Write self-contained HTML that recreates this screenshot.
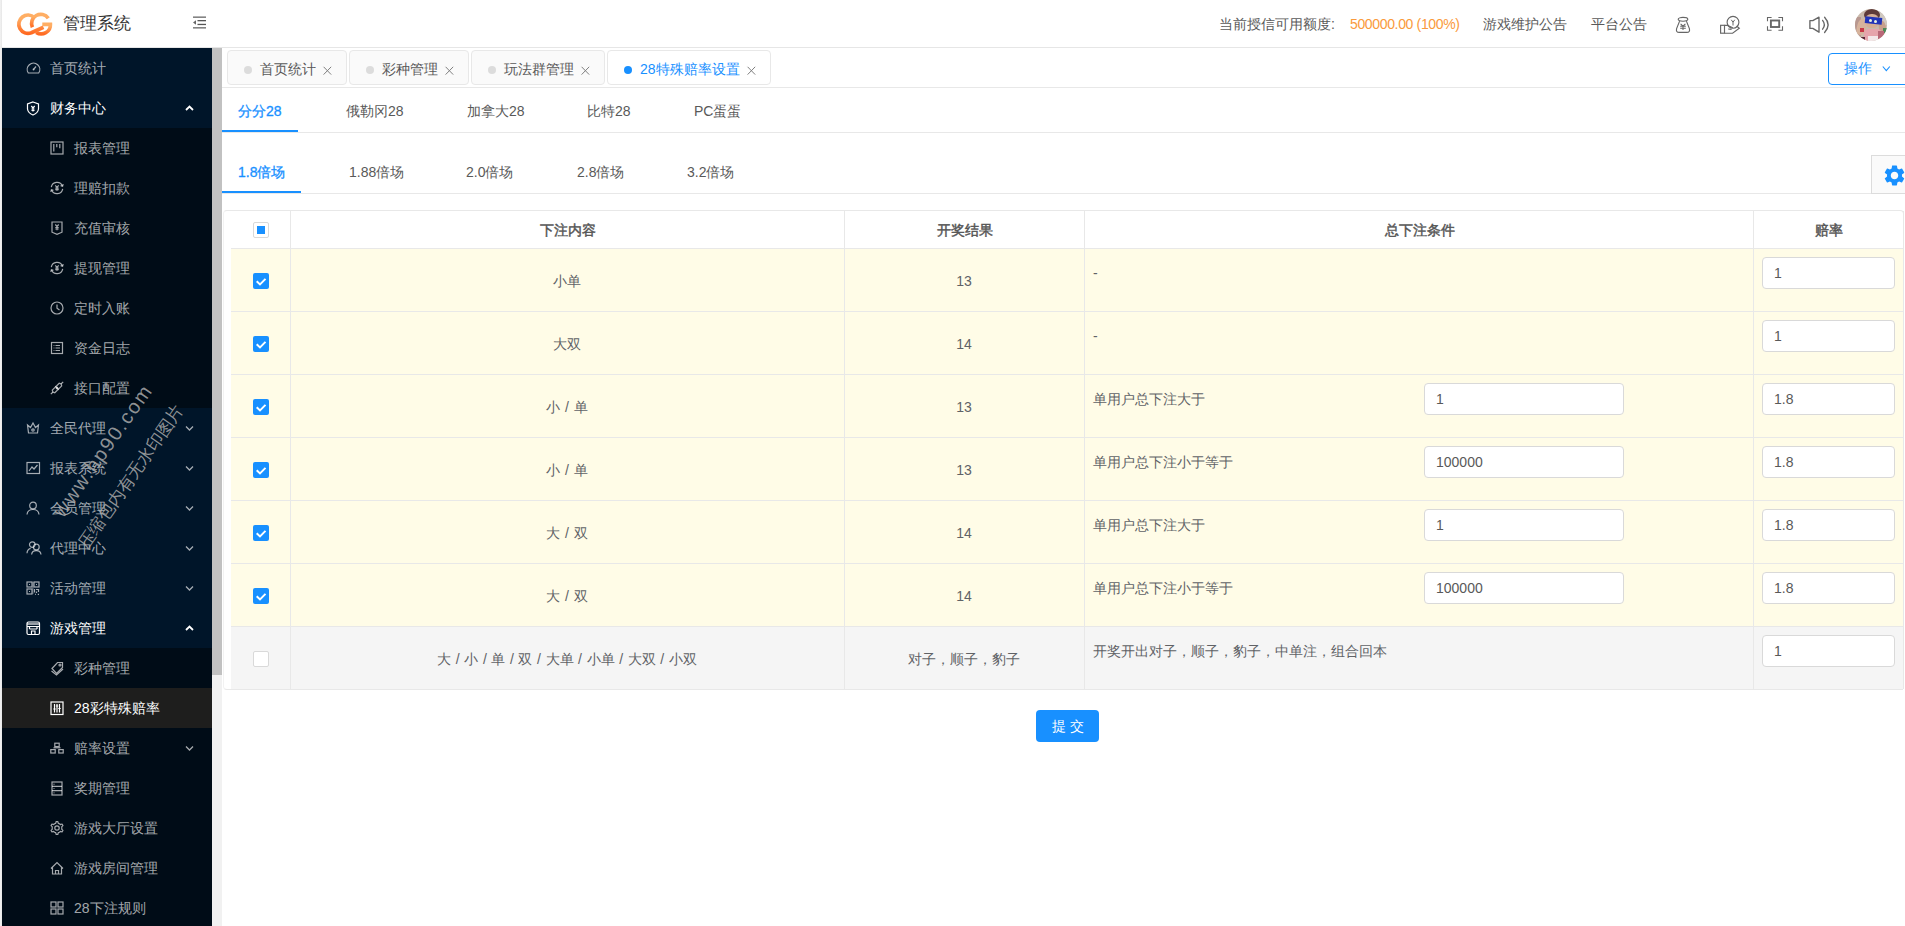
<!DOCTYPE html><html><head><meta charset="utf-8"><style>
*{box-sizing:border-box;margin:0;padding:0}
html,body{width:1905px;height:926px;overflow:hidden;background:#fff;font-family:"Liberation Sans",sans-serif;font-size:14px;color:#595959}
div,span{position:absolute;white-space:nowrap}
.mi{left:0;width:210px;height:40px;line-height:40px;color:rgba(255,255,255,.65)}
.mi.sub{background:#000c17}
.mi .t{left:48px;top:0}
.mi.sub .t{left:72px}
.mi.open{color:#fff}
.mi.sel{background:#1e1e1d;color:#fff}
svg{position:absolute;overflow:visible}
.tab{top:50px;height:35px;border:1px solid #e8e8e8;border-radius:4px;background:#fafafa;color:#595959;line-height:33px}
.tab .dot{left:16px;top:15px;width:8px;height:8px;border-radius:50%;background:#dcdcdc}
.tab .tt{left:32px;top:2px}
.ntab{color:#595959;line-height:20px}
.ntab.act{color:#1890ff}
.ln{background:#e8e8e8}
.inp{height:32px;border:1px solid #d9d9d9;border-radius:4px;background:#fff;line-height:30px;padding-left:11px;color:#595959}
.cb{width:16px;height:16px;border-radius:2px}
.cb.on{background:#1890ff}
.cb.off{background:#fff;border:1px solid #d9d9d9}
.ct{line-height:20px;color:#606266}
</style></head><body>
<div style="left:0;top:0;width:2px;height:926px;background:linear-gradient(to right,#f3f3f3,#e6e6e6)"></div>
<div style="left:2px;top:0;width:1903px;height:47px;background:#fff"></div>
<div class="ln" style="left:2px;top:47px;width:1903px;height:1px;background:#e6e6e6"></div>
<svg style="left:0;top:0" width="60" height="48" viewBox="0 0 60 48">
<defs><linearGradient id="lg" x1="0" y1="0" x2="0" y2="1"><stop offset="0.2" stop-color="#ffae64"/><stop offset="1" stop-color="#ff6a22"/></linearGradient></defs>
<g fill="none" stroke="url(#lg)" stroke-width="3.7" stroke-linecap="butt">
<path d="M34.4 17.6 A9.2 9.2 0 1 0 31.3 32.8 L43.5 27.2"/>
<path d="M48.3 18.2 A9.2 9.2 0 0 0 32.4 27.3"/>
<path d="M36.2 32.4 A9.2 9.2 0 0 0 50.4 24.3 L42.3 24.3"/>
</g></svg>
<div style="left:63px;top:12px;font-size:17px;line-height:24px;color:#333">管理系统</div>
<svg style="left:193px;top:16px" width="14" height="13" viewBox="0 0 14 13">
<rect x="0" y="0.5" width="13" height="1.3" fill="#666"/><rect x="4.5" y="4" width="8.5" height="1.3" fill="#555"/>
<rect x="4.5" y="7.8" width="8.5" height="1.3" fill="#555"/><rect x="0" y="11.2" width="13" height="1.3" fill="#666"/>
<path d="M0 6.5 L3 4.2 L3 8.8Z" fill="#666"/></svg>
<div style="left:1219px;top:14px;line-height:20px;color:#595959">当前授信可用额度</div>
<div style="left:1331px;top:14px;line-height:20px;color:#595959">:</div>
<div style="left:1350px;top:14px;line-height:20px;color:#fa9a3c;letter-spacing:-0.35px">500000.00 (100%)</div>
<div style="left:1483px;top:14px;line-height:20px;color:#595959">游戏维护公告</div>
<div style="left:1591px;top:14px;line-height:20px;color:#595959">平台公告</div>
<svg style="left:1675px;top:16px" width="16" height="17" viewBox="0 0 16 17" fill="none" stroke="#666" stroke-width="1.15">
<ellipse cx="8" cy="3.3" rx="4.8" ry="1.9"/>
<path d="M4.6 5.1 L1.6 12.6 Q0.7 16.4 4.2 16.4 L11.8 16.4 Q15.3 16.4 14.4 12.6 L11.4 5.1"/>
<path d="M5.6 7.8 L8 10.2 L10.4 7.8 M8 10.2 L8 14 M5.2 10.2 L10.8 10.2 M5.2 12.3 L10.8 12.3" stroke-width="1.05"/></svg>
<svg style="left:1720px;top:16px" width="22" height="18" viewBox="0 0 22 18" fill="none" stroke="#666" stroke-width="1.15">
<circle cx="13" cy="6.3" r="5.9"/><path d="M11.3 3.8 L13 6.3 L14.7 3.8 M13 6.3 L13 9.5" stroke-width="1"/>
<rect x="0.6" y="9.3" width="3.9" height="7.9"/><path d="M4.5 9.4 L7.5 9.4 L12.8 11.7 M16.6 10 L19.3 12.3 L12.6 17.2 L4.5 17.2 M8.2 13 L11.6 13.4"/></svg>
<svg style="left:1767px;top:17px" width="16" height="14" viewBox="0 0 16 14" fill="none" stroke="#666" stroke-width="1.1">
<path d="M0.5 4.3 L0.5 0.5 L4.6 0.5 M11.4 0.5 L15.5 0.5 L15.5 4.3 M15.5 9.3 L15.5 13.2 L11.4 13.2 M4.6 13.2 L0.5 13.2 L0.5 9.3"/>
<rect x="3.9" y="3.5" width="8.3" height="6.5" stroke-width="1.9"/></svg>
<svg style="left:1808px;top:16px" width="22" height="18" viewBox="0 0 22 18" fill="none" stroke="#666" stroke-width="1.35" stroke-linejoin="round" stroke-linecap="round">
<path d="M1.9 4.6 L4.8 4.6 L11 1.2 L11 16.2 L4.8 12.4 L1.9 12.4Z"/><path d="M14.6 4.4 Q18.1 8.8 14.6 13.2"/><path d="M16.6 1.3 Q23.6 8.9 16.6 16.5"/></svg>
<div style="left:1855px;top:9px;width:32px;height:32px;border-radius:50%;overflow:hidden;background:#c9b9ab">
<div style="left:-2px;top:-2px;width:36px;height:36px;filter:blur(0.7px)">
<div style="left:0;top:10px;width:8px;height:22px;background:#b89890"></div>
<div style="left:26px;top:4px;width:10px;height:14px;background:#d0c8c0"></div>
<div style="left:11px;top:2px;width:16px;height:12px;border-radius:50%;background:#5e3a38"></div>
<div style="left:12px;top:7px;width:14px;height:14px;border-radius:45%;background:#d5ad94"></div>
<div style="left:4px;top:12px;width:9px;height:16px;border-radius:40%;background:#d7b39c;transform:rotate(15deg)"></div>
<div style="left:26px;top:14px;width:7px;height:14px;border-radius:40%;background:#c9a08c;transform:rotate(-10deg)"></div>
<div style="left:12px;top:10px;width:17px;height:7px;background:#2234b8;transform:rotate(6deg)"></div>
<div style="left:16px;top:12px;width:3px;height:3px;background:#e8f0e0;border-radius:50%"></div>
<div style="left:21px;top:13px;width:3px;height:3px;background:#e8f0e0;border-radius:50%"></div>
<div style="left:7px;top:21px;width:4px;height:4px;background:#c83848"></div>
<div style="left:30px;top:21px;width:5px;height:5px;background:#4e8a58"></div>
<div style="left:11px;top:22px;width:18px;height:14px;border-radius:30%;background:#e6a4ac"></div>
<div style="left:15px;top:29px;width:10px;height:7px;background:#f4e8ea"></div>
<div style="left:3px;top:30px;width:9px;height:6px;background:#5a2838"></div>
<div style="left:25px;top:24px;width:6px;height:10px;background:#b86878"></div>
</div></div>
<div style="left:2px;top:48px;width:210px;height:878px;background:#001529;overflow:hidden">
<div class="mi" style="top:0px"><svg style="left:24px;top:13px" width="14" height="14" viewBox="0 0 14 14"><path d="M2.3 12 A6.3 6.3 0 1 1 12.7 12 Z" stroke="rgba(255,255,255,.65)" fill="none" stroke-width="1.2"/><path d="M7.5 8.5 L10 5.5" stroke="rgba(255,255,255,.65)" fill="none" stroke-width="1.2"/><circle cx="7.5" cy="8.5" r="0.9" fill="rgba(255,255,255,.65)"/></svg><span class="t">首页统计</span></div>
<div class="mi open" style="top:40px"><svg style="left:24px;top:13px" width="14" height="14" viewBox="0 0 14 14"><path d="M7 1 L12.5 3 L12.5 8 Q12 12 7 14 Q2 12 1.5 8 L1.5 3Z" stroke="#fff" fill="none" stroke-width="1.2"/><path d="M5.3 5 L7 7 L8.7 5 M7 7 L7 10.5 M5.5 8 L8.5 8 M5.5 9.5 L8.5 9.5" stroke="#fff" fill="none" stroke-width="1.2" stroke-width="1"/></svg><span class="t">财务中心</span><svg style="left:183px;top:17px" width="9" height="7" viewBox="0 0 9 7"><path d="M1 5 L4.5 1.5 L8 5" stroke="#fff" stroke-width="1.8" fill="none"/></svg></div>
<div class="mi sub" style="top:80px"><svg style="left:48px;top:13px" width="14" height="14" viewBox="0 0 14 14"><rect x="1" y="1" width="12" height="12" stroke="rgba(255,255,255,.65)" fill="none" stroke-width="1.2"/><path d="M3.8 3 L3.8 10.5 M6.8 3 L6.8 6.2 M9.8 3 L9.8 7.2" stroke="rgba(255,255,255,.65)" fill="none" stroke-width="1.2" stroke-width="1.5"/></svg><span class="t">报表管理</span></div>
<div class="mi sub" style="top:120px"><svg style="left:48px;top:13px" width="14" height="14" viewBox="0 0 14 14"><path d="M1.3 6.2 A5.8 5.8 0 0 1 12.4 5" stroke="rgba(255,255,255,.65)" fill="none" stroke-width="1.2"/><path d="M12.7 7.8 A5.8 5.8 0 0 1 1.6 9" stroke="rgba(255,255,255,.65)" fill="none" stroke-width="1.2"/><path d="M10.6 4.6 L12.6 5.3 L13.2 3.2 M3.4 9.4 L1.4 8.7 L0.8 10.8" stroke="rgba(255,255,255,.65)" fill="none" stroke-width="1.2" stroke-width="1"/><path d="M5.3 4.3 L7 6.3 L8.7 4.3 M7 6.3 L7 9.8 M5.3 7.2 L8.7 7.2 M5.3 8.6 L8.7 8.6" stroke="rgba(255,255,255,.65)" fill="none" stroke-width="1.2" stroke-width="1"/></svg><span class="t">理赔扣款</span></div>
<div class="mi sub" style="top:160px"><svg style="left:48px;top:13px" width="14" height="14" viewBox="0 0 14 14"><path d="M2 1 L12 1 L12 11.2 L7 13.3 L2 11.2Z" stroke="rgba(255,255,255,.65)" fill="none" stroke-width="1.2"/><path d="M5.3 3.5 L7 5.5 L8.7 3.5 M7 5.5 L7 9.3 M5.3 6.5 L8.7 6.5 M5.3 8 L8.7 8" stroke="rgba(255,255,255,.65)" fill="none" stroke-width="1.2" stroke-width="1"/></svg><span class="t">充值审核</span></div>
<div class="mi sub" style="top:200px"><svg style="left:48px;top:13px" width="14" height="14" viewBox="0 0 14 14"><path d="M1.3 6.2 A5.8 5.8 0 0 1 12.4 5" stroke="rgba(255,255,255,.65)" fill="none" stroke-width="1.2"/><path d="M12.7 7.8 A5.8 5.8 0 0 1 1.6 9" stroke="rgba(255,255,255,.65)" fill="none" stroke-width="1.2"/><path d="M10.6 4.6 L12.6 5.3 L13.2 3.2 M3.4 9.4 L1.4 8.7 L0.8 10.8" stroke="rgba(255,255,255,.65)" fill="none" stroke-width="1.2" stroke-width="1"/><path d="M5.3 4.3 L7 6.3 L8.7 4.3 M7 6.3 L7 9.8 M5.3 7.2 L8.7 7.2 M5.3 8.6 L8.7 8.6" stroke="rgba(255,255,255,.65)" fill="none" stroke-width="1.2" stroke-width="1"/></svg><span class="t">提现管理</span></div>
<div class="mi sub" style="top:240px"><svg style="left:48px;top:13px" width="14" height="14" viewBox="0 0 14 14"><circle cx="7" cy="7" r="6" stroke="rgba(255,255,255,.65)" fill="none" stroke-width="1.2"/><path d="M7 3.5 L7 7.3 L9.5 9" stroke="rgba(255,255,255,.65)" fill="none" stroke-width="1.2"/></svg><span class="t">定时入账</span></div>
<div class="mi sub" style="top:280px"><svg style="left:48px;top:13px" width="14" height="14" viewBox="0 0 14 14"><rect x="1.5" y="1.5" width="11" height="11" stroke="rgba(255,255,255,.65)" fill="none" stroke-width="1.2"/><path d="M5.5 4.5 L10 4.5 M5.5 7 L10 7 M5.5 9.5 L10 9.5 M3.6 4.5 L4.4 4.5 M3.6 7 L4.4 7 M3.6 9.5 L4.4 9.5" stroke="rgba(255,255,255,.65)" fill="none" stroke-width="1.2"/></svg><span class="t">资金日志</span></div>
<div class="mi sub" style="top:320px"><svg style="left:48px;top:13px" width="14" height="14" viewBox="0 0 14 14"><path d="M0.8 13.2 L3 11 M11 3 L13.2 0.8 M6 8 L8 6" stroke="rgba(255,255,255,.65)" fill="none" stroke-width="1.2"/><path d="M3 11 L2.3 9.2 L5.8 5.7 L8.3 8.2 L4.8 11.7Z" stroke="rgba(255,255,255,.65)" fill="none" stroke-width="1.2"/><path d="M11 3 L11.7 4.8 L8.2 8.3 L5.7 5.8 L9.2 2.3Z" stroke="rgba(255,255,255,.65)" fill="none" stroke-width="1.2"/></svg><span class="t">接口配置</span></div>
<div class="mi" style="top:360px"><svg style="left:24px;top:13px" width="14" height="14" viewBox="0 0 14 14"><path d="M1.5 4 L4.5 6.5 L7 2 L9.5 6.5 L12.5 4 L11.5 12 L2.5 12Z" stroke="rgba(255,255,255,.65)" fill="none" stroke-width="1.2"/><circle cx="7" cy="9" r="1.2" stroke="rgba(255,255,255,.65)" fill="none" stroke-width="1.2"/></svg><span class="t">全民代理</span><svg style="left:183px;top:17px" width="9" height="7" viewBox="0 0 9 7"><path d="M1 1.5 L4.5 5 L8 1.5" stroke="rgba(255,255,255,.65)" stroke-width="1.3" fill="none"/></svg></div>
<div class="mi" style="top:400px"><svg style="left:24px;top:13px" width="14" height="14" viewBox="0 0 14 14"><rect x="1" y="1.5" width="12.5" height="11" stroke="rgba(255,255,255,.65)" fill="none" stroke-width="1.2"/><path d="M3 10 L6 6 L8 8 L11.5 4" stroke="rgba(255,255,255,.65)" fill="none" stroke-width="1.2"/></svg><span class="t">报表系统</span><svg style="left:183px;top:17px" width="9" height="7" viewBox="0 0 9 7"><path d="M1 1.5 L4.5 5 L8 1.5" stroke="rgba(255,255,255,.65)" stroke-width="1.3" fill="none"/></svg></div>
<div class="mi" style="top:440px"><svg style="left:24px;top:13px" width="14" height="14" viewBox="0 0 14 14"><circle cx="7" cy="4.5" r="3.3" stroke="rgba(255,255,255,.65)" fill="none" stroke-width="1.2"/><path d="M1 13.5 Q1.5 8.5 7 8.5 Q12.5 8.5 13 13.5" stroke="rgba(255,255,255,.65)" fill="none" stroke-width="1.2"/></svg><span class="t">会员管理</span><svg style="left:183px;top:17px" width="9" height="7" viewBox="0 0 9 7"><path d="M1 1.5 L4.5 5 L8 1.5" stroke="rgba(255,255,255,.65)" stroke-width="1.3" fill="none"/></svg></div>
<div class="mi" style="top:480px"><svg style="left:24px;top:13px" width="14" height="14" viewBox="0 0 14 14"><circle cx="6.3" cy="3.6" r="2.8" stroke="rgba(255,255,255,.65)" fill="none" stroke-width="1.2"/><path d="M1 12.3 Q1.2 8.2 4.6 7.3" stroke="rgba(255,255,255,.65)" fill="none" stroke-width="1.2"/><circle cx="10.3" cy="6" r="2.9" stroke="rgba(255,255,255,.65)" fill="none" stroke-width="1.2"/><path d="M5.6 13.5 Q6 9.6 10.3 9.6 Q14.6 9.6 15 13.5" stroke="rgba(255,255,255,.65)" fill="none" stroke-width="1.2"/></svg><span class="t">代理中心</span><svg style="left:183px;top:17px" width="9" height="7" viewBox="0 0 9 7"><path d="M1 1.5 L4.5 5 L8 1.5" stroke="rgba(255,255,255,.65)" stroke-width="1.3" fill="none"/></svg></div>
<div class="mi" style="top:520px"><svg style="left:24px;top:13px" width="14" height="14" viewBox="0 0 14 14"><rect x="1" y="1" width="5" height="5" stroke="rgba(255,255,255,.65)" fill="none" stroke-width="1.2"/><rect x="8" y="1" width="5" height="5" stroke="rgba(255,255,255,.65)" fill="none" stroke-width="1.2"/><rect x="1" y="8" width="5" height="5" stroke="rgba(255,255,255,.65)" fill="none" stroke-width="1.2"/><rect x="3" y="3" width="1" height="1" fill="rgba(255,255,255,.65)"/><rect x="10" y="3" width="1" height="1" fill="rgba(255,255,255,.65)"/><rect x="3" y="10" width="1" height="1" fill="rgba(255,255,255,.65)"/><path d="M8.5 8 L8.5 11.5 M10 8.5 L12.5 8.5 L12.5 11 M10.5 10.5 L10.5 12 M9 13.3 L9.8 13.3 M11.8 13.3 L13 13.3" stroke="rgba(255,255,255,.65)" fill="none" stroke-width="1.2"/><rect x="6.5" y="1" width="1" height="12" fill="rgba(255,255,255,.65)" opacity="0.5"/></svg><span class="t">活动管理</span><svg style="left:183px;top:17px" width="9" height="7" viewBox="0 0 9 7"><path d="M1 1.5 L4.5 5 L8 1.5" stroke="rgba(255,255,255,.65)" stroke-width="1.3" fill="none"/></svg></div>
<div class="mi open" style="top:560px"><svg style="left:24px;top:13px" width="14" height="14" viewBox="0 0 14 14"><rect x="1" y="1" width="12.5" height="12.5" rx="1.5" stroke="#fff" fill="none" stroke-width="1.2"/><path d="M1 3 L13.5 3" stroke="#fff" fill="none" stroke-width="1.2" stroke-width="2.2"/><path d="M1 5.5 L13.5 5.5 M3.5 5.5 L3.5 8 M11 5.5 L11 8 M3.5 8 L11 8 M5.5 13.5 L5.5 10 L9 10 L9 13.5" stroke="#fff" fill="none" stroke-width="1.2"/></svg><span class="t">游戏管理</span><svg style="left:183px;top:17px" width="9" height="7" viewBox="0 0 9 7"><path d="M1 5 L4.5 1.5 L8 5" stroke="#fff" stroke-width="1.8" fill="none"/></svg></div>
<div class="mi sub" style="top:600px"><svg style="left:48px;top:13px" width="14" height="14" viewBox="0 0 14 14"><path d="M2 7.5 L7.5 1.5 L12.5 1.5 L12.5 6.5 L6.5 12.5Z" stroke="rgba(255,255,255,.65)" fill="none" stroke-width="1.2"/><circle cx="10" cy="4" r="1" stroke="rgba(255,255,255,.65)" fill="none" stroke-width="1.2"/><path d="M1.5 10 L6.5 14 L13 8" stroke="rgba(255,255,255,.65)" fill="none" stroke-width="1.2"/></svg><span class="t">彩种管理</span></div>
<div class="mi sub sel" style="top:640px"><svg style="left:48px;top:13px" width="14" height="14" viewBox="0 0 14 14"><rect x="1" y="1" width="12" height="12.5" stroke="#fff" fill="none" stroke-width="1.2"/><path d="M4.5 3 L4.5 11.5 M7 3 L7 11.5 M9.5 3 L9.5 11.5" stroke="#fff" fill="none" stroke-width="1.2"/><path d="M3.3 8 L5.7 8 M5.8 5 L8.2 5 M8.3 7.5 L10.7 7.5" stroke="#fff" fill="none" stroke-width="1.2" stroke-width="1.6"/></svg><span class="t">28彩特殊赔率</span></div>
<div class="mi sub" style="top:680px"><svg style="left:48px;top:13px" width="14" height="14" viewBox="0 0 14 14"><rect x="4.8" y="2.2" width="4.4" height="3.4" stroke="rgba(255,255,255,.65)" fill="none" stroke-width="1.2"/><rect x="0.8" y="8.6" width="4.4" height="3.4" stroke="rgba(255,255,255,.65)" fill="none" stroke-width="1.2"/><rect x="8.8" y="8.6" width="4.4" height="3.4" stroke="rgba(255,255,255,.65)" fill="none" stroke-width="1.2"/><path d="M3.5 6.8 L10.5 6.8" stroke="rgba(255,255,255,.65)" fill="none" stroke-width="1.2" stroke-width="1"/></svg><span class="t">赔率设置</span><svg style="left:183px;top:17px" width="9" height="7" viewBox="0 0 9 7"><path d="M1 1.5 L4.5 5 L8 1.5" stroke="rgba(255,255,255,.65)" stroke-width="1.3" fill="none"/></svg></div>
<div class="mi sub" style="top:720px"><svg style="left:48px;top:13px" width="14" height="14" viewBox="0 0 14 14"><rect x="2" y="1" width="10" height="13" stroke="rgba(255,255,255,.65)" fill="none" stroke-width="1.2"/><path d="M2 5.3 L12 5.3 M2 9.6 L12 9.6" stroke="rgba(255,255,255,.65)" fill="none" stroke-width="1.2"/><circle cx="4" cy="3.2" r="0.6" fill="rgba(255,255,255,.65)"/><circle cx="4" cy="7.5" r="0.6" fill="rgba(255,255,255,.65)"/><circle cx="4" cy="11.8" r="0.6" fill="rgba(255,255,255,.65)"/></svg><span class="t">奖期管理</span></div>
<div class="mi sub" style="top:760px"><svg style="left:48px;top:13px" width="14" height="14" viewBox="0 0 14 14"><path d="M5.70 2.38 L6.08 0.67 L7.92 0.67 L8.30 2.38 L9.45 2.76 L10.35 3.56 L12.03 3.04 L12.94 4.63 L11.65 5.82 L11.90 7.00 L11.65 8.18 L12.94 9.37 L12.03 10.96 L10.35 10.44 L9.45 11.24 L8.30 11.62 L7.92 13.33 L6.08 13.33 L5.70 11.62 L4.55 11.24 L3.65 10.44 L1.97 10.96 L1.06 9.37 L2.35 8.18 L2.10 7.00 L2.35 5.82 L1.06 4.63 L1.97 3.04 L3.65 3.56 L4.55 2.76Z" stroke="rgba(255,255,255,.65)" fill="none" stroke-width="1.2" stroke-linejoin="round"/><circle cx="7" cy="7" r="2.2" stroke="rgba(255,255,255,.65)" fill="none" stroke-width="1.2"/></svg><span class="t">游戏大厅设置</span></div>
<div class="mi sub" style="top:800px"><svg style="left:48px;top:13px" width="14" height="14" viewBox="0 0 14 14"><path d="M1 7.5 L7 1.5 L13 7.5 M2.5 6 L2.5 13 L11.5 13 L11.5 6 M5.5 13 L5.5 9.5 L8.5 9.5 L8.5 13" stroke="rgba(255,255,255,.65)" fill="none" stroke-width="1.2"/></svg><span class="t">游戏房间管理</span></div>
<div class="mi sub" style="top:840px"><svg style="left:48px;top:13px" width="14" height="14" viewBox="0 0 14 14"><rect x="1" y="1" width="5" height="5" stroke="rgba(255,255,255,.65)" fill="none" stroke-width="1.2"/><rect x="8" y="1" width="5" height="5" stroke="rgba(255,255,255,.65)" fill="none" stroke-width="1.2"/><rect x="1" y="8" width="5" height="5" stroke="rgba(255,255,255,.65)" fill="none" stroke-width="1.2"/><rect x="8" y="8" width="5" height="5" stroke="rgba(255,255,255,.65)" fill="none" stroke-width="1.2"/></svg><span class="t">28下注规则</span></div>
</div>
<div style="left:65px;top:502px;font-size:20px;line-height:18px;color:rgba(170,170,170,.85);transform:rotate(-55deg);transform-origin:0 100%;letter-spacing:1.8px">www.hp90.com</div>
<div style="left:90px;top:534px;font-size:17px;line-height:18px;color:rgba(170,170,170,.85);transform:rotate(-55deg);transform-origin:0 100%">压缩包内有无水印图片</div>
<div style="left:212px;top:48px;width:10px;height:878px;background:#f1f1f1"></div>
<div style="left:212px;top:48px;width:10px;height:627px;background:#c1c1c1"></div>
<div class="tab" style="left:227px;width:120px;background:#fafafa"><div class="dot" style="background:#dcdcdc"></div><span class="tt" style="color:#595959">首页统计</span><svg style="left:95px;top:15px" width="9" height="9" viewBox="0 0 9 9"><path d="M0.6 0.8 L8.2 8.6 M8.2 0.8 L0.6 8.6" stroke="#808080" stroke-width="1"/></svg></div>
<div class="tab" style="left:349px;width:120px;background:#fafafa"><div class="dot" style="background:#dcdcdc"></div><span class="tt" style="color:#595959">彩种管理</span><svg style="left:95px;top:15px" width="9" height="9" viewBox="0 0 9 9"><path d="M0.6 0.8 L8.2 8.6 M8.2 0.8 L0.6 8.6" stroke="#808080" stroke-width="1"/></svg></div>
<div class="tab" style="left:471px;width:134px;background:#fafafa"><div class="dot" style="background:#dcdcdc"></div><span class="tt" style="color:#595959">玩法群管理</span><svg style="left:109px;top:15px" width="9" height="9" viewBox="0 0 9 9"><path d="M0.6 0.8 L8.2 8.6 M8.2 0.8 L0.6 8.6" stroke="#808080" stroke-width="1"/></svg></div>
<div class="tab" style="left:607px;width:164px;background:#fff"><div class="dot" style="background:#1890ff"></div><span class="tt" style="color:#1890ff">28特殊赔率设置</span><svg style="left:139px;top:15px" width="9" height="9" viewBox="0 0 9 9"><path d="M0.6 0.8 L8.2 8.6 M8.2 0.8 L0.6 8.6" stroke="#808080" stroke-width="1"/></svg></div>
<div class="ln" style="left:222px;top:87px;width:1683px;height:1px"></div>
<div style="left:1828px;top:53px;width:90px;height:32px;border:1px solid #1890ff;border-radius:4px;background:#fff;line-height:30px;color:#1890ff"><span style="left:15px;top:-1px">操作</span><svg style="left:53px;top:12px" width="9" height="6" viewBox="0 0 9 6"><path d="M0.8 0.5 L4.3 4.6 L7.8 0.5" stroke="#1890ff" stroke-width="1.1" fill="none"/></svg></div>
<span class="ntab act" style="left:238px;top:101px;-webkit-text-stroke:0.3px #1890ff;">分分28</span>
<span class="ntab" style="left:346px;top:101px;">俄勒冈28</span>
<span class="ntab" style="left:467px;top:101px;">加拿大28</span>
<span class="ntab" style="left:587px;top:101px;">比特28</span>
<span class="ntab" style="left:694px;top:101px;">PC蛋蛋</span>
<div class="ln" style="left:222px;top:132px;width:1683px;height:1px"></div>
<div style="left:222px;top:130px;width:76px;height:2px;background:#1890ff"></div>
<span class="ntab act" style="left:238px;top:162px;-webkit-text-stroke:0.3px #1890ff;">1.8倍场</span>
<span class="ntab" style="left:349px;top:162px;">1.88倍场</span>
<span class="ntab" style="left:466px;top:162px;">2.0倍场</span>
<span class="ntab" style="left:577px;top:162px;">2.8倍场</span>
<span class="ntab" style="left:687px;top:162px;">3.2倍场</span>
<div class="ln" style="left:222px;top:193px;width:1683px;height:1px"></div>
<div style="left:222px;top:191px;width:79px;height:2px;background:#1890ff"></div>
<div style="left:1871px;top:155px;width:40px;height:39px;border:1px solid #dcdcdc;background:#fafafa"></div>
<svg style="left:1881.5px;top:162.5px" width="25" height="25" viewBox="0 0 24 24"><path fill="#1890ff" d="M19.14 12.94c.04-.3.06-.61.06-.94 0-.32-.02-.64-.07-.94l2.03-1.58a.49.49 0 0 0 .12-.61l-1.92-3.32a.488.488 0 0 0-.59-.22l-2.39.96c-.5-.38-1.03-.7-1.62-.94l-.36-2.54a.484.484 0 0 0-.48-.41h-3.84c-.24 0-.43.17-.47.41l-.36 2.54c-.59.24-1.13.57-1.62.94l-2.39-.96c-.22-.08-.47 0-.59.22L2.74 8.87c-.12.21-.08.47.12.61l2.03 1.58c-.05.3-.09.63-.09.94s.02.64.07.94l-2.03 1.58a.49.49 0 0 0-.12.61l1.92 3.32c.12.22.37.29.59.22l2.39-.96c.5.38 1.03.7 1.62.94l.36 2.54c.05.24.24.41.48.41h3.84c.24 0 .44-.17.47-.41l.36-2.54c.59-.24 1.13-.56 1.62-.94l2.39.96c.22.08.47 0 .59-.22l1.92-3.32c.12-.22.07-.47-.12-.61l-2.01-1.58zM12 15.6c-1.98 0-3.6-1.62-3.6-3.6s1.62-3.6 3.6-3.6 3.6 1.62 3.6 3.6-1.62 3.6-3.6 3.6z"/></svg>
<div style="left:223px;top:210px;width:1681px;height:480px;border:1px solid #e8e8e8;border-left-color:#f2f2f2;border-radius:4px;background:#fff"></div>
<div style="left:231px;top:249px;width:1672px;height:62px;background:#fffce7"></div>
<div style="left:231px;top:312px;width:1672px;height:62px;background:#fffce7"></div>
<div style="left:231px;top:375px;width:1672px;height:62px;background:#fffce7"></div>
<div style="left:231px;top:438px;width:1672px;height:62px;background:#fffce7"></div>
<div style="left:231px;top:501px;width:1672px;height:62px;background:#fffce7"></div>
<div style="left:231px;top:564px;width:1672px;height:62px;background:#fffce7"></div>
<div style="left:231px;top:627px;width:1672px;height:62px;background:#f5f5f5"></div>
<div class="ln" style="left:231px;top:248px;width:1672px;height:1px;background:#e8e8e8"></div>
<div class="ln" style="left:231px;top:311px;width:1672px;height:1px;background:#e8e8e8"></div>
<div class="ln" style="left:231px;top:374px;width:1672px;height:1px;background:#e8e8e8"></div>
<div class="ln" style="left:231px;top:437px;width:1672px;height:1px;background:#e8e8e8"></div>
<div class="ln" style="left:231px;top:500px;width:1672px;height:1px;background:#e8e8e8"></div>
<div class="ln" style="left:231px;top:563px;width:1672px;height:1px;background:#e8e8e8"></div>
<div class="ln" style="left:231px;top:626px;width:1672px;height:1px;background:#e8e8e8"></div>
<div class="ln" style="left:231px;top:689px;width:1672px;height:1px;background:#e8e8e8"></div>
<div class="ln" style="left:290px;top:211px;width:1px;height:478px;background:#e8e8e8"></div>
<div class="ln" style="left:844px;top:211px;width:1px;height:478px;background:#e8e8e8"></div>
<div class="ln" style="left:1084px;top:211px;width:1px;height:478px;background:#e8e8e8"></div>
<div class="ln" style="left:1753px;top:211px;width:1px;height:478px;background:#e8e8e8"></div>
<div class="ln" style="left:1903px;top:211px;width:1px;height:478px;background:#e8e8e8"></div>
<div class="ct" style="left:291px;width:554px;top:220px;text-align:center;-webkit-text-stroke:0.45px #555;color:#555">下注内容</div>
<div class="ct" style="left:845px;width:240px;top:220px;text-align:center;-webkit-text-stroke:0.45px #555;color:#555">开奖结果</div>
<div class="ct" style="left:1085px;width:669px;top:220px;text-align:center;-webkit-text-stroke:0.45px #555;color:#555">总下注条件</div>
<div class="ct" style="left:1754px;width:150px;top:220px;text-align:center;-webkit-text-stroke:0.45px #555;color:#555">赔率</div>
<div class="cb off" style="left:253px;top:222px"><div style="left:3px;top:3px;width:8px;height:8px;background:#1890ff"></div></div>
<div class="cb on" style="left:253px;top:273px"><svg style="left:0;top:0" width="16" height="16" viewBox="0 0 16 16"><path d="M3.7 8.2 L7 11.4 L12.5 5.9" stroke="#fff" stroke-width="2" fill="none"/></svg></div>
<div class="ct" style="left:290px;width:554px;top:271px;text-align:center;word-spacing:0.7px">小单</div>
<div class="ct" style="left:844px;width:240px;top:271px;text-align:center">13</div>
<div class="ct" style="left:1093px;top:263px">-</div>
<div class="inp" style="left:1762px;top:257px;width:133px">1</div>
<div class="cb on" style="left:253px;top:336px"><svg style="left:0;top:0" width="16" height="16" viewBox="0 0 16 16"><path d="M3.7 8.2 L7 11.4 L12.5 5.9" stroke="#fff" stroke-width="2" fill="none"/></svg></div>
<div class="ct" style="left:290px;width:554px;top:334px;text-align:center;word-spacing:0.7px">大双</div>
<div class="ct" style="left:844px;width:240px;top:334px;text-align:center">14</div>
<div class="ct" style="left:1093px;top:326px">-</div>
<div class="inp" style="left:1762px;top:320px;width:133px">1</div>
<div class="cb on" style="left:253px;top:399px"><svg style="left:0;top:0" width="16" height="16" viewBox="0 0 16 16"><path d="M3.7 8.2 L7 11.4 L12.5 5.9" stroke="#fff" stroke-width="2" fill="none"/></svg></div>
<div class="ct" style="left:290px;width:554px;top:397px;text-align:center;word-spacing:0.7px">小 / 单</div>
<div class="ct" style="left:844px;width:240px;top:397px;text-align:center">13</div>
<div class="ct" style="left:1093px;top:389px">单用户总下注大于</div>
<div class="inp" style="left:1424px;top:383px;width:200px">1</div>
<div class="inp" style="left:1762px;top:383px;width:133px">1.8</div>
<div class="cb on" style="left:253px;top:462px"><svg style="left:0;top:0" width="16" height="16" viewBox="0 0 16 16"><path d="M3.7 8.2 L7 11.4 L12.5 5.9" stroke="#fff" stroke-width="2" fill="none"/></svg></div>
<div class="ct" style="left:290px;width:554px;top:460px;text-align:center;word-spacing:0.7px">小 / 单</div>
<div class="ct" style="left:844px;width:240px;top:460px;text-align:center">13</div>
<div class="ct" style="left:1093px;top:452px">单用户总下注小于等于</div>
<div class="inp" style="left:1424px;top:446px;width:200px">100000</div>
<div class="inp" style="left:1762px;top:446px;width:133px">1.8</div>
<div class="cb on" style="left:253px;top:525px"><svg style="left:0;top:0" width="16" height="16" viewBox="0 0 16 16"><path d="M3.7 8.2 L7 11.4 L12.5 5.9" stroke="#fff" stroke-width="2" fill="none"/></svg></div>
<div class="ct" style="left:290px;width:554px;top:523px;text-align:center;word-spacing:0.7px">大 / 双</div>
<div class="ct" style="left:844px;width:240px;top:523px;text-align:center">14</div>
<div class="ct" style="left:1093px;top:515px">单用户总下注大于</div>
<div class="inp" style="left:1424px;top:509px;width:200px">1</div>
<div class="inp" style="left:1762px;top:509px;width:133px">1.8</div>
<div class="cb on" style="left:253px;top:588px"><svg style="left:0;top:0" width="16" height="16" viewBox="0 0 16 16"><path d="M3.7 8.2 L7 11.4 L12.5 5.9" stroke="#fff" stroke-width="2" fill="none"/></svg></div>
<div class="ct" style="left:290px;width:554px;top:586px;text-align:center;word-spacing:0.7px">大 / 双</div>
<div class="ct" style="left:844px;width:240px;top:586px;text-align:center">14</div>
<div class="ct" style="left:1093px;top:578px">单用户总下注小于等于</div>
<div class="inp" style="left:1424px;top:572px;width:200px">100000</div>
<div class="inp" style="left:1762px;top:572px;width:133px">1.8</div>
<div class="cb off" style="left:253px;top:651px"></div>
<div class="ct" style="left:290px;width:554px;top:649px;text-align:center;word-spacing:0.7px">大 / 小 / 单 / 双 / 大单 / 小单 / 大双 / 小双</div>
<div class="ct" style="left:844px;width:240px;top:649px;text-align:center">对子，顺子，豹子</div>
<div class="ct" style="left:1093px;top:641px">开奖开出对子，顺子，豹子，中单注，组合回本</div>
<div class="inp" style="left:1762px;top:635px;width:133px">1</div>
<div style="left:1036px;top:710px;width:63px;height:32px;border-radius:4px;background:#1890ff;color:#fff;line-height:32px;text-align:center;letter-spacing:4px;text-indent:4px">提交</div>
</body></html>
